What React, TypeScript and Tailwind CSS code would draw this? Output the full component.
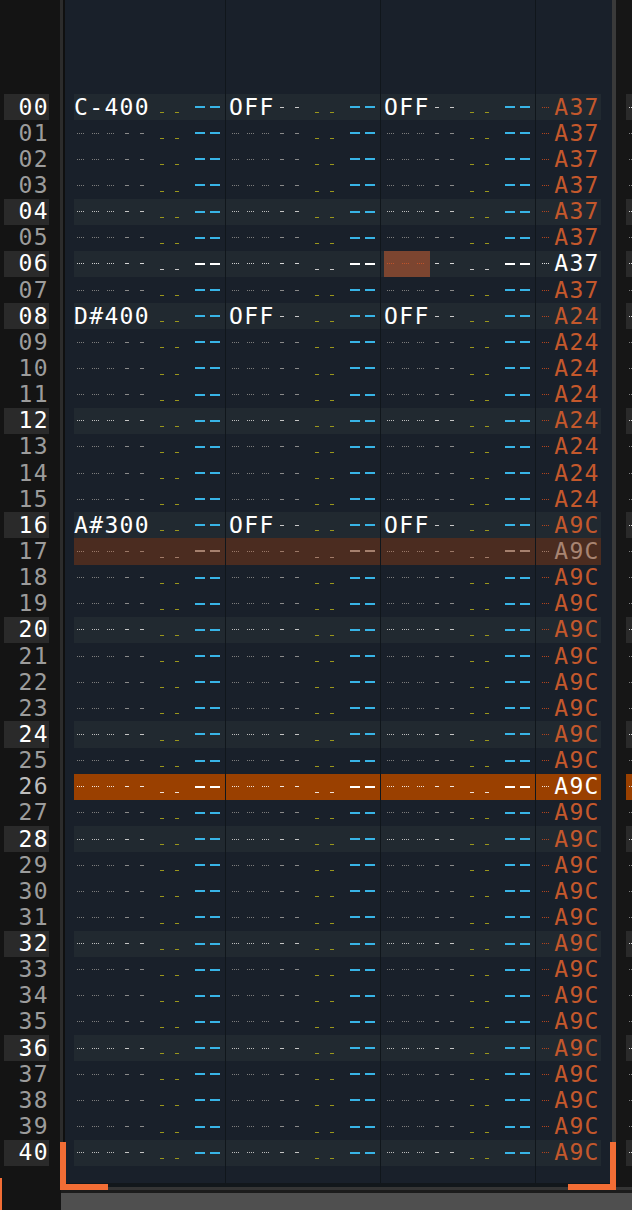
import React from "react";

type St = "n" | "h" | "c" | "s" | "p";

const pal: Record<St, { bg: string; dot: string; dash: string; yel: string; cy: string; rdot: string; eff: string; txt: string }> = {
  n: { bg: "", dot: "border-[#7d7d7d]", dash: "bg-[#8a8a8a]", yel: "bg-[#9a961c]", cy: "bg-[#38b4e6]", rdot: "border-[#b0441e]", eff: "text-[#c4582c]", txt: "text-white" },
  h: { bg: "bg-[#212930]", dot: "border-[#bdbdbd]", dash: "bg-[#c4c4c4]", yel: "bg-[#9a961c]", cy: "bg-[#38b4e6]", rdot: "border-[#b0441e]", eff: "text-[#c4582c]", txt: "text-white" },
  c: { bg: "bg-[#212930]", dot: "border-[#cfcfcf]", dash: "bg-[#d6d6d6]", yel: "bg-[#c8c8c8]", cy: "bg-white", rdot: "border-[#e0e0e0]", eff: "text-white", txt: "text-white" },
  s: { bg: "bg-[#4b2c20]", dot: "border-[#9a7868]", dash: "bg-[#9b7867]", yel: "bg-[#a07a68]", cy: "bg-[#a5806e]", rdot: "border-[#a07a68]", eff: "text-[#a88472]", txt: "text-[#a88472]" },
  p: { bg: "bg-[#9a4000]", dot: "border-[#f0e2d8]", dash: "bg-[#f2e6de]", yel: "bg-[#f0e2d8]", cy: "bg-white", rdot: "border-[#f0e2d8]", eff: "text-white", txt: "text-white" },
};

const rows = Array.from({ length: 41 }, (_, i) => i);

const notes: Record<number, string> = { 0: "C-4", 8: "D#4", 16: "A#3" };

function stateOf(i: number): St {
  if (i === 6) return "c";
  if (i === 17) return "s";
  if (i === 26) return "p";
  if (i % 4 === 0) return "h";
  return "n";
}

function effOf(i: number) {
  if (i < 8) return "A37";
  if (i < 16) return "A24";
  return "A9C";
}

const TXT = "whitespace-nowrap text-[23px] leading-none tracking-[1.35px] font-['DejaVu_Sans_Mono',monospace]";
const SEP = "border-l border-[#10161b]";

function Dots({ cls }: { cls: string }) {
  return (
    <div className="flex gap-[8px] pl-[3px]">
      <span className={`block w-[7px] shrink-0 border-t border-dotted ${cls}`} />
      <span className={`block w-[7px] shrink-0 border-t border-dotted ${cls}`} />
      <span className={`block w-[7px] shrink-0 border-t border-dotted ${cls}`} />
    </div>
  );
}

function EffChannel({ st, val }: { st: St; val: string }) {
  const p = pal[st];
  return (
    <div className={`flex h-full w-[66px] items-center pl-[3px] ${SEP}`}>
      <span className={`ml-[3px] block w-[7px] shrink-0 border-t border-dotted ${p.rdot}`} />
      <span className={`ml-[5.2px] ${TXT} ${p.eff}`}>{val}</span>
    </div>
  );
}

function ChannelBody({ st, note, cursor }: { st: St; note?: string; cursor?: boolean }) {
  const p = pal[st];
  const isOff = note === "OFF";
  const offDash = st === "c" || st === "p" ? p.dash : "bg-[#c8c8c8]";
  return (
    <div className="flex h-full items-center">
      <div className={`flex h-full w-[45.6px] shrink-0 items-center ${cursor ? "bg-[#7c4530]" : ""}`}>
        {note ? (
          <span className={`${TXT} ${p.txt}`}>{note}</span>
        ) : (
          <Dots cls={cursor ? "border-[#c0532a]" : p.dot} />
        )}
      </div>
      <div className="flex h-full w-[30.4px] shrink-0 items-center">
        {note && !isOff ? (
          <span className={`${TXT} ${p.txt}`}>00</span>
        ) : (
          <>
            <div className="flex w-[15.2px] justify-center">
              <span className={`block h-px w-[4px] ${isOff ? offDash : p.dash}`} />
            </div>
            <div className="flex w-[15.2px] justify-center">
              <span className={`block h-px w-[4px] ${isOff ? offDash : p.dash}`} />
            </div>
          </>
        )}
      </div>
      <div className="flex h-full w-[45px] shrink-0 items-end pb-[7px]">
        <span className={`ml-[10px] block h-px w-[4px] ${p.yel}`} />
        <span className={`ml-[11px] block h-px w-[4px] ${p.yel}`} />
      </div>
      <div className="flex h-full shrink-0 items-center">
        <span className={`block h-[2px] w-[10px] ${p.cy}`} />
        <span className={`ml-[5px] block h-[2px] w-[10px] ${p.cy}`} />
      </div>
    </div>
  );
}

function PatternRow({ i }: { i: number }) {
  const st = stateOf(i);
  const p = pal[st];
  const n = notes[i];
  return (
    <div className={`ml-[9px] flex h-[26.15px] w-[527px] shrink-0 ${p.bg}`}>
      <div className="flex h-full w-[151px]">
        <ChannelBody st={st} note={n} />
      </div>
      <div className={`flex h-full w-[155px] pl-[3px] ${SEP}`}>
        <ChannelBody st={st} note={n ? "OFF" : undefined} />
      </div>
      <div className={`flex h-full w-[155px] pl-[3px] ${SEP}`}>
        <ChannelBody st={st} note={n ? "OFF" : undefined} cursor={i === 6} />
      </div>
      <EffChannel st={st} val={effOf(i)} />
    </div>
  );
}

function SepFiller({ h }: { h: string }) {
  return (
    <div className={`ml-[9px] flex w-[527px] shrink-0 ${h}`}>
      <div className="w-[151px]" />
      <div className={`w-[155px] ${SEP}`} />
      <div className={`w-[155px] ${SEP}`} />
      <div className={`w-[66px] ${SEP}`} />
    </div>
  );
}

function Label({ i }: { i: number }) {
  const boxed = i % 4 === 0 || i === 6;
  const color = boxed ? "text-white" : i === 26 ? "text-[#bdbdbd]" : "text-[#9c9c9c]";
  return (
    <div className="flex h-[26.15px] shrink-0">
      <div className={`ml-[4px] flex h-full w-[45px] items-center justify-end ${boxed ? "bg-[#2a2a2a]" : ""}`}>
        <span className={`${TXT} ${color}`}>{String(i).padStart(2, "0")}</span>
      </div>
    </div>
  );
}

function RightRow({ i }: { i: number }) {
  const st = stateOf(i);
  const bg = st === "p" ? "bg-[#9a4000]" : st === "h" || st === "c" ? "bg-[#2a2a2a]" : "";
  const dot = st === "n" || st === "s" ? "border-[#7d7d7d]" : "border-[#d0d0d0]";
  return (
    <div className="flex h-[26.15px] shrink-0 items-center">
      <div className={`ml-[10px] flex h-full flex-1 items-center ${bg}`}>
        <span className={`ml-[3px] block w-[7px] shrink-0 border-t border-dotted ${dot}`} />
      </div>
    </div>
  );
}

export default function App() {
  return (
    <div className="relative h-[1210px] w-[632px] overflow-hidden bg-[#141414]">
      <div className="flex h-[1187px]">
        <div className="flex w-[60px] shrink-0 flex-col">
          <div className="h-[94px] shrink-0" />
          {rows.map((i) => (
            <Label key={i} i={i} />
          ))}
        </div>
        <div className="w-[3px] shrink-0 bg-[#2c2c2c]" />
        <div className="w-[2px] shrink-0 bg-[#101010]" />
        <div className="flex w-[547px] shrink-0 flex-col bg-[#19202a]">
          <SepFiller h="h-[94px]" />
          {rows.map((i) => (
            <PatternRow key={i} i={i} />
          ))}
          <SepFiller h="flex-1" />
          <div className="h-[4px] shrink-0 bg-[#12171b]" />
        </div>
        <div className="w-[4px] shrink-0 bg-[#3a3a3a]" />
        <div className="flex flex-1 flex-col bg-[#161616]">
          <div className="h-[94px] shrink-0" />
          {rows.map((i) => (
            <RightRow key={i} i={i} />
          ))}
        </div>
      </div>
      <div className="flex h-[23px]">
        <div className="w-[61px] shrink-0 bg-[#141414]" />
        <div className="flex flex-1 flex-col">
          <div className="h-[3px] bg-[#353535]" />
          <div className="h-[3px] bg-[#1c1c1c]" />
          <div className="flex-1 bg-[#4f4f4f]" />
        </div>
      </div>
      <div className="absolute left-0 top-[1178px] h-[32px] w-[2px] bg-[#f26d35]" />
      <div className="absolute left-[60px] top-[1142px] h-[48px] w-[6px] bg-[#f26d35]" />
      <div className="absolute left-[60px] top-[1184px] h-[6px] w-[48px] bg-[#f26d35]" />
      <div className="absolute left-[610px] top-[1142px] h-[48px] w-[6px] bg-[#f26d35]" />
      <div className="absolute left-[568px] top-[1184px] h-[6px] w-[48px] bg-[#f26d35]" />
    </div>
  );
}
